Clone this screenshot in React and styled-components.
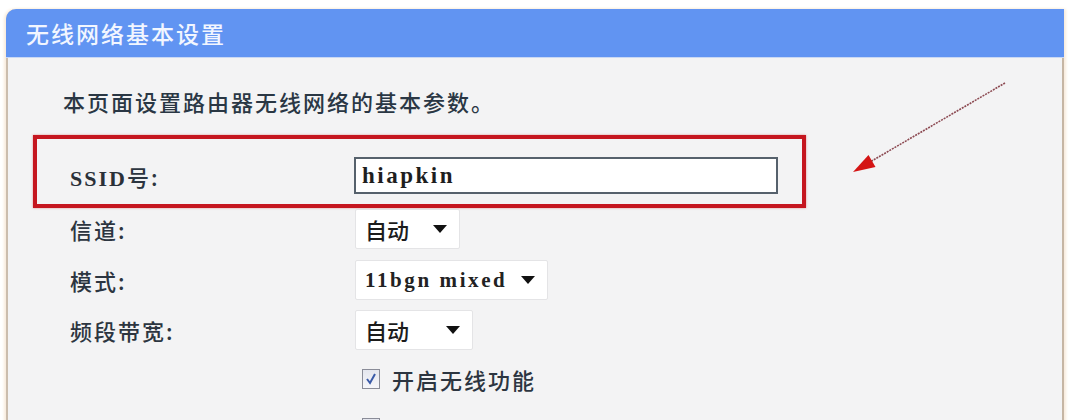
import React from "react";
import styled, { createGlobalStyle } from "styled-components";

const GlobalStyle = createGlobalStyle`
  html, body {
    margin: 0;
    padding: 0;
    background: #ffffff;
  }
  body {
    font-family: "Noto Sans CJK SC", "Noto Sans", sans-serif;
    overflow: hidden;
  }
`;

const Page = styled.div`
  padding: 9px 7px 0 6px;
`;

const Panel = styled.div`
  position: relative;
  width: 1058px;
  box-sizing: border-box;
  border-top-left-radius: 10px;
  background: #f3f3f4;
  border-left: 2px solid #cbbdad;
  border-right: 2px solid #c6b6a4;
  box-shadow: -2px 0 3px #f8ebdb, 2px 0 3px #f8ebdb;
`;

const Header = styled.div`
  height: 48px;
  margin: 0 -2px;
  padding-left: 20px;
  display: flex;
  align-items: center;
  background: #6194f2;
  border-top-left-radius: 10px;
  border-bottom: 1px solid #c9d8f4;
  color: #f2f6ff;
  font-size: 23px;
  font-weight: 500;
  letter-spacing: 2px;
`;

const Body = styled.div`
  padding: 28px 0 20px 25px;
`;

const Intro = styled.p`
  margin: 0 0 19px 30px;
  line-height: 30px;
  font-size: 22px;
  font-weight: 500;
  letter-spacing: 2px;
  color: #2a3744;
`;

const Form = styled.div`
  display: flex;
  flex-direction: column;
`;

const Highlight = styled.div`
  width: 773px;
  height: 73px;
  box-sizing: border-box;
  border: 4px solid #c5161f;
  box-shadow: 0 0 2px rgba(200, 40, 40, 0.5);
  padding: 18px 0 0 33px;
`;

const Row = styled.div`
  display: grid;
  grid-template-columns: 284px auto;
  align-items: center;
  height: ${(p) => p.$h || 40}px;
  margin-top: ${(p) => p.$mt ?? 10}px;
  padding-left: ${(p) => (p.$inBox ? 0 : 37)}px;
`;

const Label = styled.span`
  font-size: 22px;
  font-weight: 500;
  letter-spacing: 2px;
  color: #2c3540;
  white-space: nowrap;
`;

const Latin = styled.span`
  font-family: "Liberation Serif", "DejaVu Serif", serif;
  font-size: 22px;
  font-weight: bold;
  letter-spacing: 2px;
  color: #2a3038;
`;

const TextInput = styled.div`
  width: 424px;
  height: 37px;
  box-sizing: border-box;
  border: 2px solid #56616c;
  background: #ffffff;
  display: flex;
  align-items: center;
  padding-left: 6px;
  font-family: "Liberation Serif", "DejaVu Serif", serif;
  font-size: 23px;
  font-weight: bold;
  letter-spacing: 2.5px;
  color: #1e1e1e;
`;

const Select = styled.div`
  width: ${(p) => p.$w}px;
  height: 40px;
  box-sizing: border-box;
  margin-left: 1px;
  background: #ffffff;
  border: 1px solid #e4e4e6;
  border-radius: 2px;
  display: flex;
  align-items: center;
  justify-content: space-between;
  padding: 0 12px 0 9px;
  font-size: 22px;
  font-weight: 500;
  color: #1c1c1c;
`;

const SelectLatin = styled.span`
  font-family: "Liberation Serif", "DejaVu Serif", serif;
  font-size: 21px;
  font-weight: bold;
  letter-spacing: 2.6px;
  color: #222;
`;

const Caret = styled.span`
  width: 0;
  height: 0;
  border-left: 7px solid transparent;
  border-right: 7px solid transparent;
  border-top: 8px solid #111;
`;

const CheckRow = styled.label`
  display: flex;
  align-items: center;
  gap: 12px;
  padding-left: 8px;
  font-size: 22px;
  font-weight: 500;
  letter-spacing: 2px;
  color: #2c3540;
`;

const Box = styled.span`
  width: 18px;
  height: 20px;
  box-sizing: border-box;
  border: 1px solid #8a8c98;
  background: linear-gradient(#e4e6ee, #f6f6fa);
  display: flex;
  align-items: center;
  justify-content: center;
`;

const Pointer = styled.svg`
  position: absolute;
  left: 820px;
  top: 55px;
  pointer-events: none;
`;

function Check({ on }) {
  return (
    <Box>
      {on && (
        <svg width="12" height="12" viewBox="0 0 12 12">
          <path d="M2 6 L5 10 L10 1" fill="none" stroke="#3a5aa8" strokeWidth="2" />
        </svg>
      )}
    </Box>
  );
}

export default function App() {
  return (
    <>
      <GlobalStyle />
      <Page>
        <Panel>
          <Header>无线网络基本设置</Header>
          <Body>
            <Intro>本页面设置路由器无线网络的基本参数。</Intro>
            <Form>
              <Highlight>
                <Row $inBox $mt={0} $h={37}>
                  <Label>
                    <Latin>SSID</Latin>号:
                  </Label>
                  <TextInput>hiapkin</TextInput>
                </Row>
              </Highlight>
              <Row $mt={1}>
                <Label>信道:</Label>
                <Select $w={105}>
                  自动 <Caret />
                </Select>
              </Row>
              <Row $mt={11}>
                <Label>模式:</Label>
                <Select $w={193}>
                  <SelectLatin>11bgn mixed</SelectLatin>
                  <Caret />
                </Select>
              </Row>
              <Row>
                <Label>频段带宽:</Label>
                <Select $w={118}>
                  自动 <Caret />
                </Select>
              </Row>
              <Row $mt={9}>
                <span />
                <CheckRow>
                  <Check on />
                  开启无线功能
                </CheckRow>
              </Row>
              <Row $mt={9}>
                <span />
                <CheckRow>
                  <Check on />
                </CheckRow>
              </Row>
            </Form>
          </Body>
          <Pointer width="200" height="120" viewBox="0 0 200 120">
            <line
              x1="177"
              y1="19"
              x2="42"
              y2="98"
              stroke="#8c4a52"
              strokeWidth="1.6"
              strokeDasharray="2 1"
            />
            <polygon points="25,108 47.5,102.9 40.5,90.9" fill="#d41414" />
          </Pointer>
        </Panel>
      </Page>
    </>
  );
}
